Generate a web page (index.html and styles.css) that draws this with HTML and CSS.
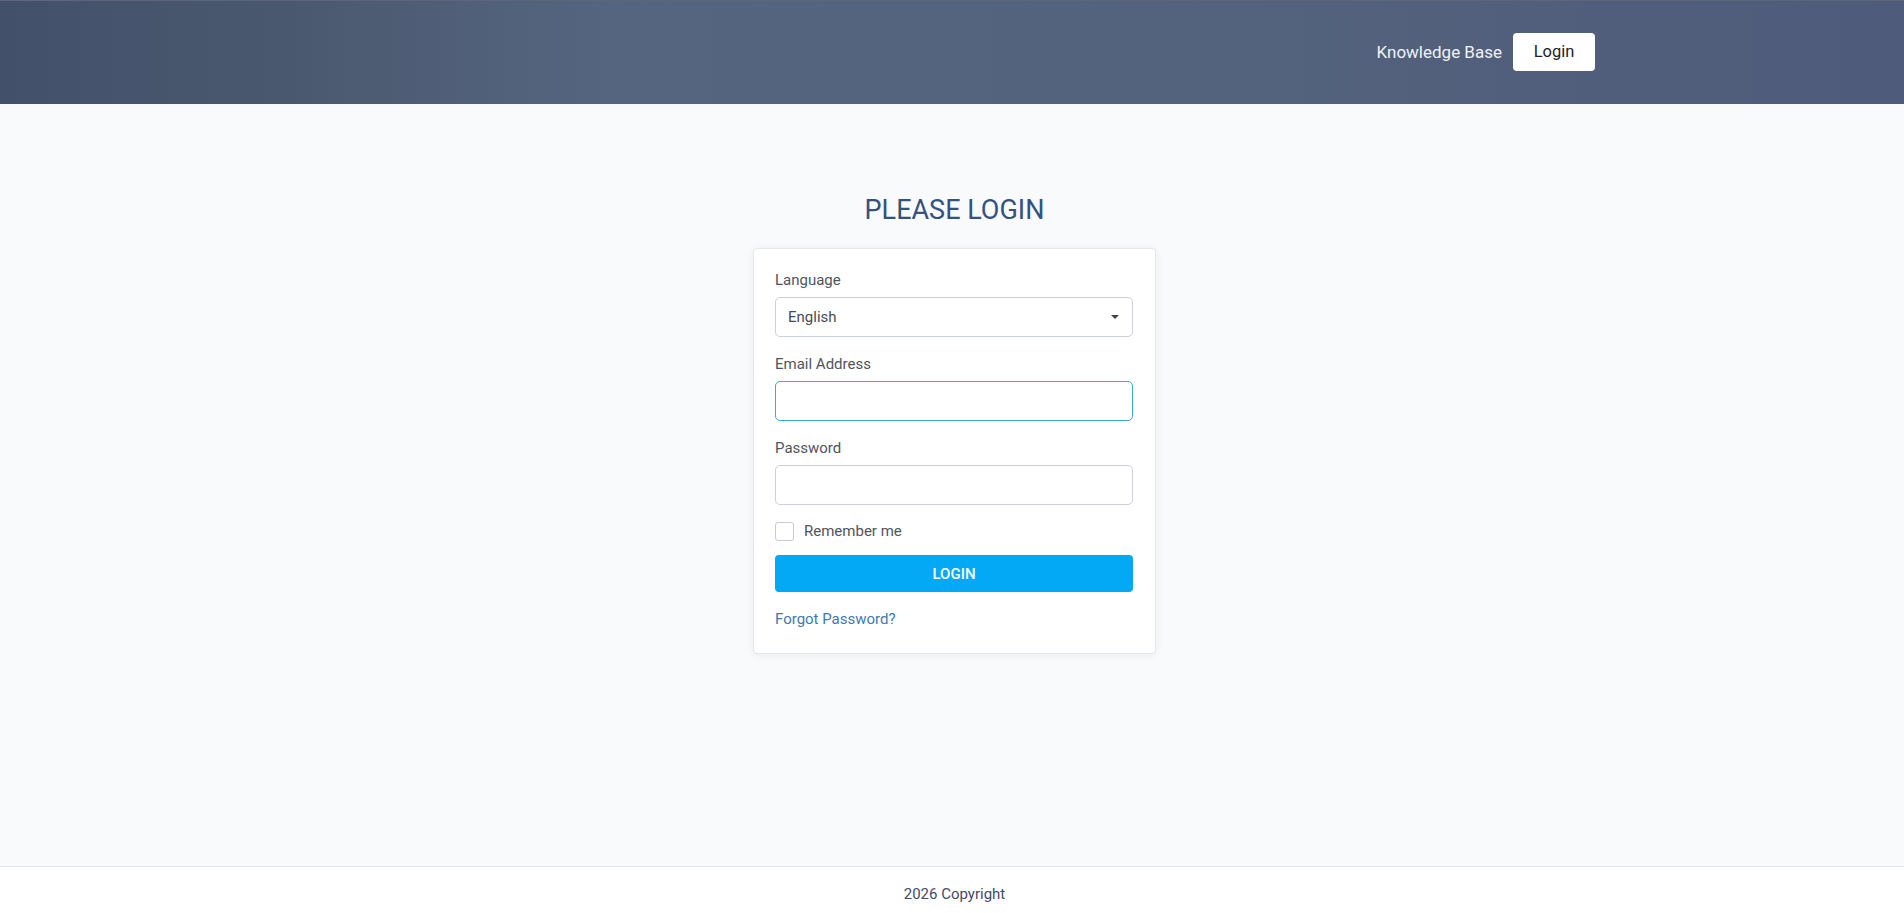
FILE: index.html
```html
<!DOCTYPE html>
<html lang="en">
<head>
<meta charset="utf-8">
<title>Please Login</title>
<link rel="stylesheet" href="styles.css">
</head>
<body>
<div class="page">
  <header class="topbar">
    <div class="container topbar-inner">
      <a class="kb-link" href="#">Knowledge Base</a>
      <a class="login-btn" href="#">Login</a>
    </div>
  </header>
  <main class="main">
    <h1 class="title">PLEASE LOGIN</h1>
    <form class="card">
      <div class="group">
        <label class="label">Language</label>
        <div class="select">
          <span class="select-value">English</span>
          <span class="caret"></span>
        </div>
      </div>
      <div class="group">
        <label class="label">Email Address</label>
        <div class="input input-focus"></div>
      </div>
      <div class="group group-pw">
        <label class="label">Password</label>
        <div class="input"></div>
      </div>
      <div class="check-row">
        <span class="checkbox"></span>
        <span class="check-label">Remember me</span>
      </div>
      <button type="button" class="submit">LOGIN</button>
      <a class="forgot" href="#">Forgot Password?</a>
    </form>
  </main>
  <footer class="footer">2026 Copyright</footer>
</div>
</body>
</html>
```

FILE: styles.css
```css
* { box-sizing: border-box; }
html, body { margin: 0; padding: 0; }
body {
  font-family: Roboto, "Liberation Sans", Arial, sans-serif;
  background: #f8fafc;
  color: #4f5560;
}
.page {
  min-height: 100vh;
  display: flex;
  flex-direction: column;
}
.topbar {
  height: 104px;
  background: linear-gradient(90deg, #43506a 0%, #4a586f 15%, #56657f 32%, #55647e 50%, #52607c 75%, #4f5b7a 100%);
  border-top: 1px solid #5d6678;
}
.container {
  width: 1316px;
  margin: 0 auto;
  padding: 0 15px;
}
.topbar-inner {
  height: 100%;
  display: flex;
  align-items: center;
  justify-content: flex-end;
  padding-bottom: 2px;
}
.kb-link {
  color: #eef3f8;
  text-decoration: none;
  font-size: 17px;
  margin-right: 11px;
}
.login-btn {
  width: 82px;
  height: 38px;
  background: #fff;
  border-radius: 4px;
  color: #1f2328;
  text-decoration: none;
  font-size: 16.5px;
  display: flex;
  align-items: center;
  justify-content: center;
}
.main {
  flex: 1;
  display: flex;
  flex-direction: column;
  align-items: center;
  padding-top: 91px;
  padding-left: 5px;
}
.title {
  margin: 0;
  font-size: 27px;
  font-weight: 400;
  line-height: 31px;
  color: #34527d;
}
.card {
  margin-top: 22px;
  width: 403px;
  background: #fff;
  border: 1px solid #e3e6ea;
  border-radius: 4px;
  box-shadow: 0 1px 8px rgba(20, 30, 50, 0.06);
  padding: 20px 22px 23px 21px;
  display: flex;
  flex-direction: column;
}
.group { margin-bottom: 16px; }
.group-pw { margin-bottom: 15px; }
.label {
  display: block;
  font-size: 15px;
  line-height: 22px;
  margin-bottom: 6px;
  color: #50555e;
}
.select, .input {
  height: 40px;
  border: 1px solid #ccd0d8;
  border-radius: 5px;
  background: #fff;
}
.select {
  display: flex;
  align-items: center;
  justify-content: space-between;
  padding: 0 13px 0 12px;
}
.select-value {
  font-size: 15px;
  color: #474b52;
}
.caret {
  width: 0;
  height: 0;
  border-left: 4px solid transparent;
  border-right: 4px solid transparent;
  border-top: 4px solid #444;
}
.input-focus { border-color: #3aa9dc; }
.check-row {
  display: flex;
  align-items: center;
  height: 22px;
  margin-bottom: 13px;
}
.checkbox {
  width: 19px;
  height: 19px;
  border: 1px solid #c5cad3;
  border-radius: 3px;
  background: #fff;
  margin-right: 10px;
}
.check-label {
  font-size: 15px;
  color: #50555e;
}
.submit {
  height: 37px;
  border: none;
  border-radius: 4px;
  background: #03a9f4;
  color: #fff;
  font-family: Roboto, "Liberation Sans", Arial, sans-serif;
  font-size: 15px;
  font-weight: 500;
  margin-bottom: 16px;
  padding: 0;
}
.forgot {
  font-size: 15px;
  line-height: 22px;
  color: #3f78b3;
  text-decoration: none;
}
.footer {
  height: 47px;
  background: #fff;
  border-top: 1px solid #e4e7eb;
  display: flex;
  align-items: center;
  justify-content: center;
  font-size: 15px;
  color: #3f4c69;
  padding-top: 8px;
  padding-left: 5px;
}
```
